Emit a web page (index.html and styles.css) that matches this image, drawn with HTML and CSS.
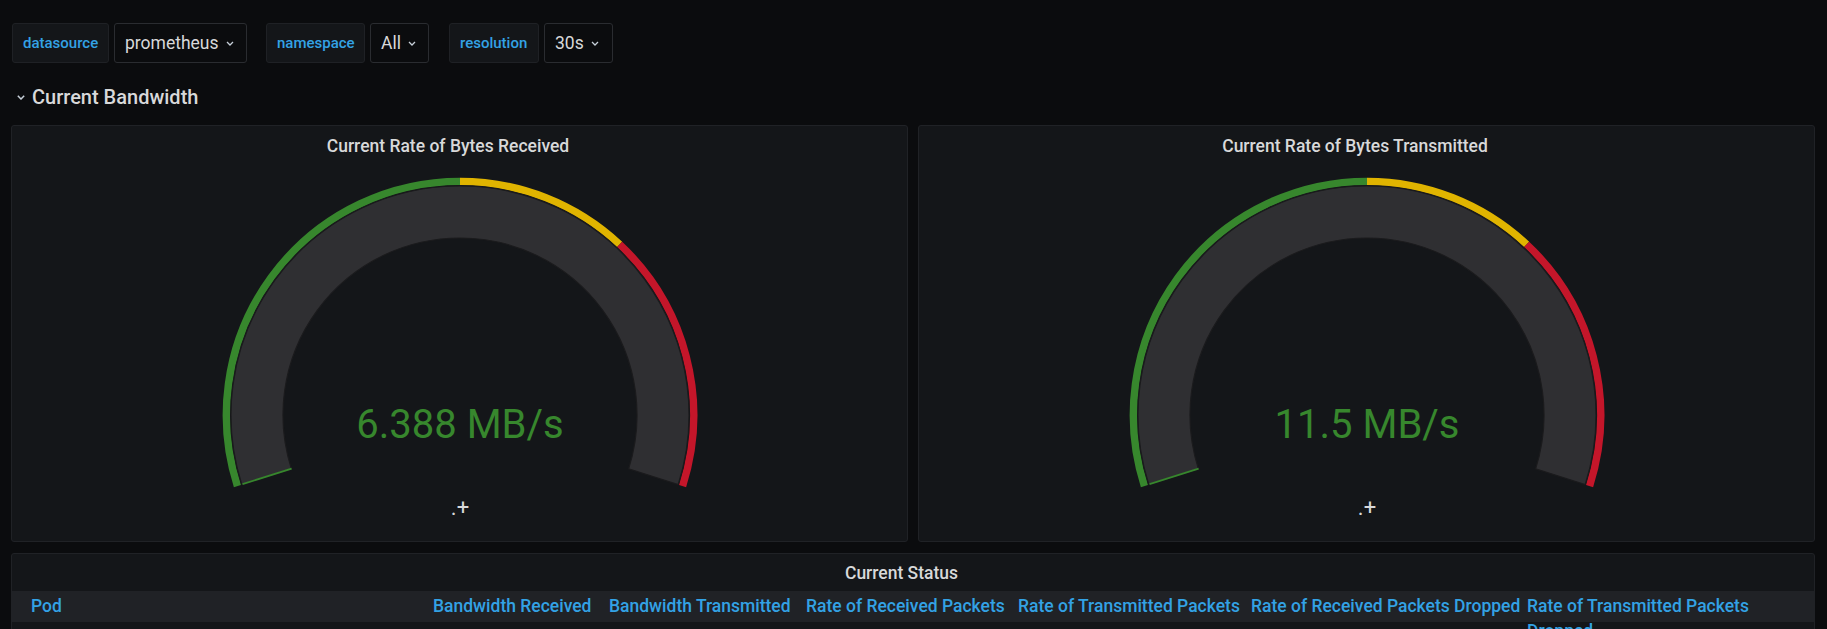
FILE: index.html
```html
<!DOCTYPE html>
<html lang="en">
<head>
<meta charset="utf-8">
<title>Bandwidth Dashboard</title>
<link rel="stylesheet" href="styles.css">
</head>
<body>
<div class="page">
  <div class="vars">
    <div class="var">
      <span class="lbl lbl-ds">datasource</span>
      <span class="val val-ds">prometheus<svg class="caret" viewBox="0 0 8 5" width="8" height="5"><polyline points="1,1 4,4 7,1"/></svg></span>
    </div>
    <div class="var">
      <span class="lbl lbl-ns">namespace</span>
      <span class="val val-ns">All<svg class="caret" viewBox="0 0 8 5" width="8" height="5"><polyline points="1,1 4,4 7,1"/></svg></span>
    </div>
    <div class="var">
      <span class="lbl lbl-res">resolution</span>
      <span class="val val-res">30s<svg class="caret" viewBox="0 0 8 5" width="8" height="5"><polyline points="1,1 4,4 7,1"/></svg></span>
    </div>
  </div>

  <div class="row-title">
    <svg class="row-chevron" viewBox="0 0 8 5" width="8" height="5"><polyline points="0.8,0.8 4,4 7.2,0.8"/></svg>
    <span>Current Bandwidth</span>
  </div>

  <div class="panels">
    <div class="panel gauge-panel">
      <div class="panel-title"><span>Current Rate of Bytes Received</span></div>
      <svg class="gauge" viewBox="0 -1 500 376" width="500" height="376">
        <path class="th th-green" d="M27.41 320.04 A233.65 233.65 0 0 1 250 15.35"/>
        <path class="th th-yellow" d="M250 15.35 A233.65 233.65 0 0 1 409.65 78.40"/>
        <path class="th th-red" d="M409.65 78.40 A233.65 233.65 0 0 1 472.59 320.04"/>
        <path class="g-bg" d="M31.84 318.62 A229 229 0 1 1 468.16 318.62 L418.62 302.81 A177 177 0 1 0 81.38 302.81 Z"/>
        <line class="g-fill" x1="32.5" y1="318.2" x2="81.6" y2="302.6"/>
        <text class="g-value" x="250" y="272" text-anchor="middle">6.388 MB/s</text>
        <text class="g-label" x="250" y="349" text-anchor="middle">.+</text>
      </svg>
    </div>
    <div class="panel gauge-panel">
      <div class="panel-title"><span>Current Rate of Bytes Transmitted</span></div>
      <svg class="gauge" viewBox="0 -1 500 376" width="500" height="376">
        <path class="th th-green" d="M27.41 320.04 A233.65 233.65 0 0 1 250 15.35"/>
        <path class="th th-yellow" d="M250 15.35 A233.65 233.65 0 0 1 409.65 78.40"/>
        <path class="th th-red" d="M409.65 78.40 A233.65 233.65 0 0 1 472.59 320.04"/>
        <path class="g-bg" d="M31.84 318.62 A229 229 0 1 1 468.16 318.62 L418.62 302.81 A177 177 0 1 0 81.38 302.81 Z"/>
        <line class="g-fill" x1="32.5" y1="318.2" x2="81.6" y2="302.6"/>
        <text class="g-value" x="250" y="272" text-anchor="middle">11.5 MB/s</text>
        <text class="g-label" x="250" y="349" text-anchor="middle">.+</text>
      </svg>
    </div>
  </div>

  <div class="panel table-panel">
    <div class="panel-title"><span>Current Status</span></div>
    <div class="thead">
      <div class="th-cell">Pod</div>
      <div class="th-cell">Bandwidth Received</div>
      <div class="th-cell">Bandwidth Transmitted</div>
      <div class="th-cell">Rate of Received Packets</div>
      <div class="th-cell">Rate of Transmitted Packets</div>
      <div class="th-cell">Rate of Received Packets Dropped</div>
      <div class="th-cell th-last">Rate of Transmitted Packets Dropped</div>
    </div>
  </div>
</div>
</body>
</html>
```

FILE: styles.css
```css
html, body {
  margin: 0;
  padding: 0;
  height: 100%;
  overflow: hidden;
  background: #0b0c0e;
}

body {
  font-family: Roboto, "Liberation Sans", Arial, sans-serif;
  color: #d8d9da;
}

.page {
  padding: 23px 12px 0 11px;
}

/* ---------- variables bar ---------- */
.vars {
  display: flex;
  align-items: center;
  margin-left: 1px;
}

.var {
  display: flex;
  gap: 5px;
  margin-right: 20px;
}

.var:nth-child(1) { margin-right: 19px; }

.lbl, .val {
  box-sizing: border-box;
  height: 40px;
  display: flex;
  align-items: center;
  border-radius: 3px;
  white-space: nowrap;
}

.lbl {
  background: #141619;
  border: 1px solid #1f2125;
  color: #33a2e5;
  font-size: 15px;
  font-weight: 500;
  padding-left: 10px;
}

.lbl-ds { width: 97px; }
.lbl-ns { width: 99px; }
.lbl-res { width: 90px; }

.val {
  background: #0b0c0e;
  border: 1px solid #2a2c30;
  color: #d8d9da;
  font-size: 17.5px;
  padding-left: 10px;
}

.val-ds { width: 133px; }
.val-ns { width: 59px; }
.val-res { width: 69px; }

.caret {
  margin-left: 7px;
  margin-top: 1px;
  fill: none;
  stroke: #c7d0d9;
  stroke-width: 1.3;
}

/* ---------- row title ---------- */
.row-title {
  display: flex;
  align-items: center;
  height: 40px;
  margin-top: 14px;
  margin-bottom: 8px;
  font-size: 20px;
  font-weight: 500;
  color: #d8d9da;
}

.row-chevron {
  margin-left: 6px;
  margin-right: 7px;
  margin-top: 1px;
  fill: none;
  stroke: #c7d0d9;
  stroke-width: 1.5;
}

/* ---------- panels ---------- */
.panels {
  display: grid;
  grid-template-columns: 1fr 1fr;
  gap: 10px;
}

.panel {
  background: #141619;
  border: 1px solid #202226;
  border-radius: 3px;
  box-sizing: border-box;
}

.panel-title {
  display: flex;
  justify-content: center;
  align-items: center;
  font-size: 17.5px;
  font-weight: 500;
  color: #d8d9da;
  white-space: nowrap;
}

.panel-title span {
  margin-right: 23px;
}

.gauge-panel {
  height: 417px;
  display: flex;
  flex-direction: column;
}

.gauge-panel .panel-title {
  height: 39px;
}

.gauge {
  display: block;
  margin: 0 auto;
}

.th {
  fill: none;
  stroke-width: 7.4;
}

.th-green { stroke: #37872d; }
.th-yellow { stroke: #e0b400; }
.th-red { stroke: #c4162a; }

.g-bg {
  fill: #2f2f32;
  stroke: #1b1b1d;
  stroke-width: 1.2;
}

.g-fill {
  stroke: #37872d;
  stroke-width: 1.8;
}

.g-value {
  font-family: Roboto, "Liberation Sans", Arial, sans-serif;
  font-size: 40px;
  fill: #37872d;
}

.g-label {
  font-family: Roboto, "Liberation Sans", Arial, sans-serif;
  font-size: 22px;
  fill: #d8d9da;
}

/* ---------- table ---------- */
.table-panel {
  margin-top: 11px;
  height: 220px;
}

.table-panel .panel-title {
  height: 37px;
}

.thead {
  display: grid;
  grid-template-columns: 402px 176px 197px 212px 233px 276px 250px;
  height: 31px;
  box-sizing: border-box;
  padding: 3px 0 0 19px;
  background: #202226;
}

.th-cell {
  color: #33a2e5;
  font-size: 17.5px;
  font-weight: 500;
  line-height: 25px;
  white-space: nowrap;
}

.th-last {
  white-space: normal;
}
```
